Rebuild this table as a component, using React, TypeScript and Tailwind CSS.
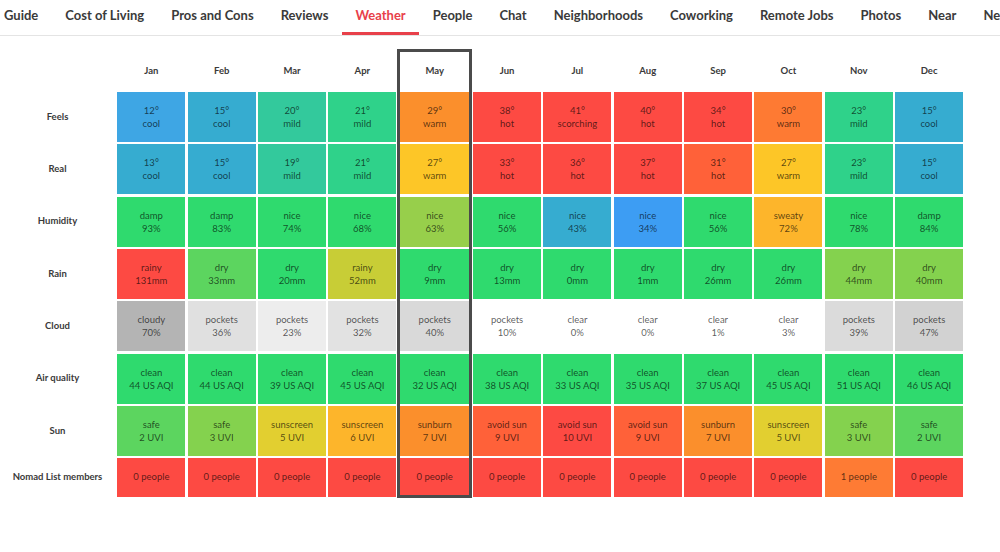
import React from "react"

const tabs = ["Guide", "Cost of Living", "Pros and Cons", "Reviews", "Weather", "People", "Chat", "Neighborhoods", "Coworking", "Remote Jobs", "Photos", "Near", "Next"]

const months = ["Jan", "Feb", "Mar", "Apr", "May", "Jun", "Jul", "Aug", "Sep", "Oct", "Nov", "Dec"]

type Cell = [string, string, string]

const C = {
  blue: "bg-[#3ea6e4]",
  cyan: "bg-[#36acd0]",
  teal: "bg-[#33c99c]",
  mint: "bg-[#2fd28a]",
  green: "bg-[#2fda6e]",
  lime: "bg-[#5cd55f]",
  yg: "bg-[#84d24e]",
  ygMay: "bg-[#97cf4b]",
  olive: "bg-[#c8cd36]",
  yellow: "bg-[#fdc627]",
  mustard: "bg-[#e2cf30]",
  amber: "bg-[#fdb52b]",
  orange: "bg-[#fb8f2c]",
  orange2: "bg-[#fe7a33]",
  redOr: "bg-[#ff6139]",
  red: "bg-[#fd4a43]",
  skyBlue: "bg-[#3d9df3]",
  gray70: "bg-[#b4b4b4]",
  gray36: "bg-[#e0e0e0]",
  gray23: "bg-[#ededed]",
  gray32: "bg-[#e2e2e2]",
  gray40: "bg-[#d9d9d9]",
  gray39: "bg-[#dbdbdb]",
  gray47: "bg-[#d2d2d2]",
  white: "bg-white",
}

const rows: { label: string; cells: Cell[] }[] = [
  {
    label: "Feels",
    cells: [
      ["12°", "cool", C.blue], ["15°", "cool", C.cyan], ["20°", "mild", C.teal], ["21°", "mild", C.mint],
      ["29°", "warm", C.orange], ["38°", "hot", C.red], ["41°", "scorching", C.red], ["40°", "hot", C.red],
      ["34°", "hot", C.red], ["30°", "warm", C.orange2], ["23°", "mild", C.mint], ["15°", "cool", C.cyan],
    ],
  },
  {
    label: "Real",
    cells: [
      ["13°", "cool", C.cyan], ["15°", "cool", C.cyan], ["19°", "mild", C.teal], ["21°", "mild", C.mint],
      ["27°", "warm", C.yellow], ["33°", "hot", C.red], ["36°", "hot", C.red], ["37°", "hot", C.red],
      ["31°", "hot", C.redOr], ["27°", "warm", C.yellow], ["23°", "mild", C.mint], ["15°", "cool", C.cyan],
    ],
  },
  {
    label: "Humidity",
    cells: [
      ["damp", "93%", C.green], ["damp", "83%", C.green], ["nice", "74%", C.green], ["nice", "68%", C.green],
      ["nice", "63%", C.ygMay], ["nice", "56%", C.green], ["nice", "43%", C.cyan], ["nice", "34%", C.skyBlue],
      ["nice", "56%", C.green], ["sweaty", "72%", C.amber], ["nice", "78%", C.green], ["damp", "84%", C.green],
    ],
  },
  {
    label: "Rain",
    cells: [
      ["rainy", "131mm", C.red], ["dry", "33mm", C.lime], ["dry", "20mm", C.green], ["rainy", "52mm", C.olive],
      ["dry", "9mm", C.green], ["dry", "13mm", C.green], ["dry", "0mm", C.green], ["dry", "1mm", C.green],
      ["dry", "26mm", C.green], ["dry", "26mm", C.green], ["dry", "44mm", C.yg], ["dry", "40mm", C.yg],
    ],
  },
  {
    label: "Cloud",
    cells: [
      ["cloudy", "70%", C.gray70], ["pockets", "36%", C.gray36], ["pockets", "23%", C.gray23], ["pockets", "32%", C.gray32],
      ["pockets", "40%", C.gray40], ["pockets", "10%", C.white], ["clear", "0%", C.white], ["clear", "0%", C.white],
      ["clear", "1%", C.white], ["clear", "3%", C.white], ["pockets", "39%", C.gray39], ["pockets", "47%", C.gray47],
    ],
  },
  {
    label: "Air quality",
    cells: [
      ["clean", "44 US AQI", C.green], ["clean", "44 US AQI", C.green], ["clean", "39 US AQI", C.green], ["clean", "45 US AQI", C.green],
      ["clean", "32 US AQI", C.green], ["clean", "38 US AQI", C.green], ["clean", "33 US AQI", C.green], ["clean", "35 US AQI", C.green],
      ["clean", "37 US AQI", C.green], ["clean", "45 US AQI", C.green], ["clean", "51 US AQI", C.green], ["clean", "46 US AQI", C.green],
    ],
  },
  {
    label: "Sun",
    cells: [
      ["safe", "2 UVI", C.lime], ["safe", "3 UVI", C.yg], ["sunscreen", "5 UVI", C.mustard], ["sunscreen", "6 UVI", C.amber],
      ["sunburn", "7 UVI", C.orange], ["avoid sun", "9 UVI", C.redOr], ["avoid sun", "10 UVI", C.red], ["avoid sun", "9 UVI", C.redOr],
      ["sunburn", "7 UVI", C.orange], ["sunscreen", "5 UVI", C.mustard], ["safe", "3 UVI", C.yg], ["safe", "2 UVI", C.lime],
    ],
  },
]

const members = ["0", "0", "0", "0", "0", "0", "0", "0", "0", "0", "1", "0"]

export default function App() {
  return (
    <div className="h-[552px] w-[1000px] overflow-hidden bg-white font-['Lato','Liberation_Sans',sans-serif] text-[#333]">
      <nav className="flex h-[36px] overflow-hidden border-b border-[#e4e4e4]">
        <div className="-ml-[9.5px] flex whitespace-nowrap">
          {tabs.map((t) => (
            <a
              key={t}
              className={
                "flex h-[35px] items-center px-[13.5px] pb-[4px] text-[13px] font-bold " +
                (t === "Weather" ? "border-b-[3px] border-[#e8404a] pt-[3px] text-[#e8404a]" : "text-[#3a3a3a]")
              }
            >
              {t}
            </a>
          ))}
        </div>
      </nav>

      <div className="relative mt-[16px]">
        <div className="grid grid-cols-[115px_repeat(4,68px)_72px_repeat(7,68px)] grid-rows-[37.5px_repeat(7,50px)_38.5px] gap-[2.35px] text-[9.5px]">
          <div />
          {months.map((m) => (
            <div key={m} className="flex items-center justify-center font-bold text-[#3a3a3a]">
              {m}
            </div>
          ))}

          {rows.map((r) => (
            <React.Fragment key={r.label}>
              <div className="flex items-center justify-center font-bold text-[#3a3a3a]">{r.label}</div>
              {r.cells.map(([a, b, bg], i) => (
                <div key={i} className={"flex flex-col items-center justify-center leading-[13px] text-black/65 " + bg}>
                  <span>{a}</span>
                  <span>{b}</span>
                </div>
              ))}
            </React.Fragment>
          ))}

          <div className="flex items-center justify-center whitespace-nowrap font-bold text-[#3a3a3a]">Nomad List members</div>
          {members.map((n, i) => (
            <div
              key={i}
              className={"flex items-center justify-center text-black/65 " + (n === "1" ? "bg-[#fe7b34]" : "bg-[#fd4a43]")}
            >
              {n} people
            </div>
          ))}
        </div>

        {/* current month highlight */}
        <div className="pointer-events-none absolute left-[396.7px] top-[-3px] h-[449.3px] w-[75px] border-[3px] border-[#4b4b4b]" />
      </div>
    </div>
  )
}
